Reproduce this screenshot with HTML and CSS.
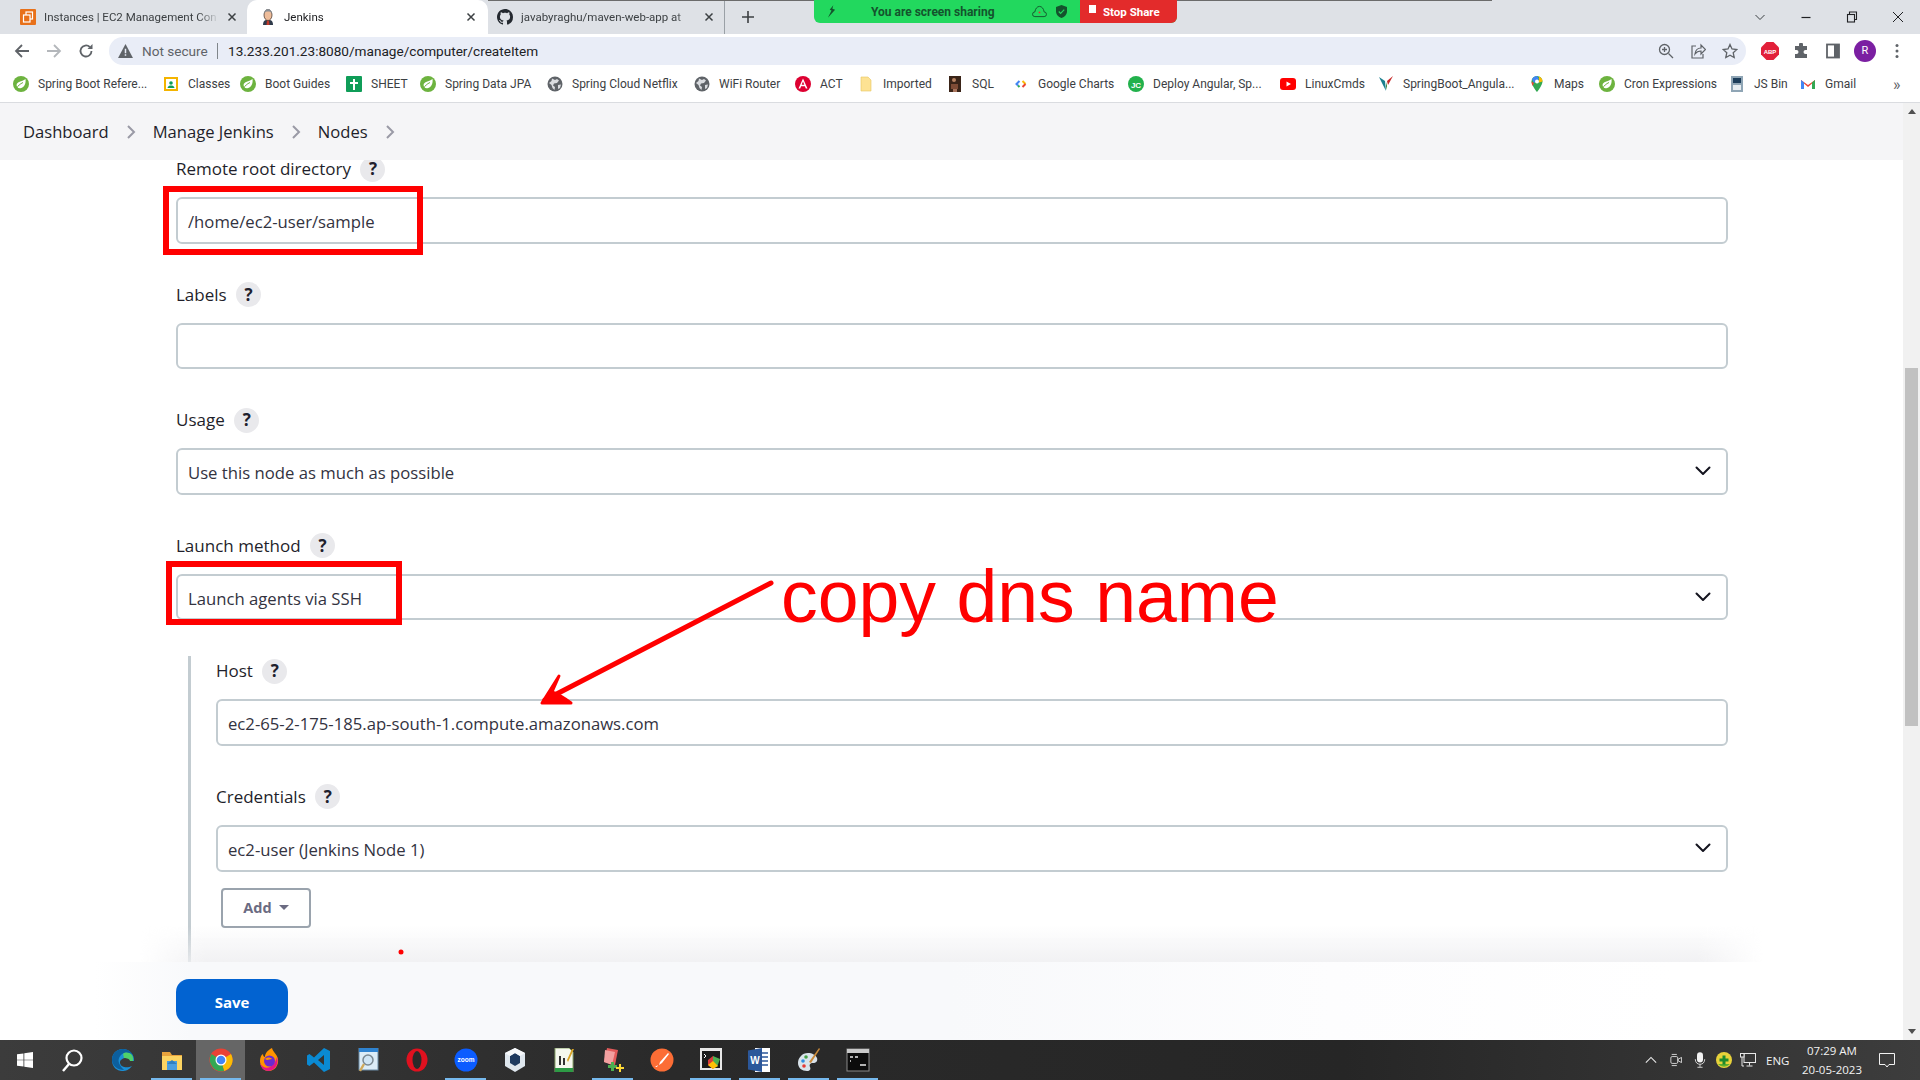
FILE: index.html
```html
<!DOCTYPE html>
<html lang="en">
<head>
<meta charset="utf-8">
<title>Jenkins</title>
<link rel="stylesheet" href="styles.css">
</head>
<body>
<svg class="defs" width="0" height="0" aria-hidden="true">
  <symbol id="leaf" viewBox="0 0 16 16">
    <circle cx="8" cy="8" r="8" fill="#6db33f"/>
    <path d="M12.5 3c.6 4-.8 8.5-5 9.2C5 12.6 3.4 11 3.6 8.8 4 5.400 8.500 6 12.500 3z" fill="#fff"/>
    <path d="M3.500 12.500C5 9.500 7 8 10 6.500" stroke="#6db33f" stroke-width="1" fill="none"/>
  </symbol>
  <symbol id="globe" viewBox="0 0 16 16">
    <circle cx="8" cy="8" r="7.500" fill="#5f6368"/>
    <path d="M5 2.500l3 1.500 2-1 2 1.500-2 2.500-3 .5-1 2 2 1.500-.5 3-2-2-1-3-2.500-2L4.500 5z" fill="#dadce0"/>
    <path d="M11 9l3-.5-1 3.500-2 1z" fill="#dadce0"/>
  </symbol>
  <symbol id="chev" viewBox="0 0 16 10">
    <path d="M1.500 1.500L8 8l6.500-6.500" fill="none" stroke="#14141f" stroke-width="2" stroke-linecap="round" stroke-linejoin="round"/>
  </symbol>
  <symbol id="crumb" viewBox="0 0 10 14">
    <path d="M2 1L8 7l-6 6" fill="none" stroke="#9a9aa6" stroke-width="2"/>
  </symbol>
</svg>

<div class="tabstrip">
  <div class="tab tab-first">
    <svg class="favicon" viewBox="0 0 16 16"><rect width="16" height="16" rx="1" fill="#e8711a"/><rect x="6" y="3" width="6.500" height="7" fill="none" stroke="#fff" stroke-width="1.200"/><rect x="3.500" y="6" width="6.500" height="7" fill="#e8711a" stroke="#fff" stroke-width="1.200"/></svg>
    <span class="tab-title">Instances | EC2 Management Con</span>
    <svg class="tab-close" viewBox="0 0 10 10"><path d="M1.500 1.500l7 7M8.500 1.500l-7 7" stroke="#3c4043" stroke-width="1.500"/></svg>
  </div>
  <div class="tab tab-active">
    <svg class="favicon" viewBox="0 0 16 16"><path d="M3 16c0-3 1-4.500 3-5h4c2 .5 3 2 3 5z" fill="#2f3a4a"/><path d="M7 11h2l.500 5h-3z" fill="#c0392b"/><ellipse cx="8" cy="6" rx="4" ry="5.500" fill="#eebd9b" stroke="#3b2a20" stroke-width=".7"/><path d="M4 5c0-3 2-5 4-5s4 2 4 5c-1-2-2-2.500-4-2.500S5 3 4 5z" fill="#8a8f96"/></svg>
    <span class="tab-title">Jenkins</span>
    <svg class="tab-close" viewBox="0 0 10 10"><path d="M1.500 1.500l7 7M8.500 1.500l-7 7" stroke="#3c4043" stroke-width="1.500"/></svg>
  </div>
  <div class="tab tab-github">
    <svg class="favicon" viewBox="0 0 16 16"><path fill="#24292f" d="M8 0C3.580 0 0 3.580 0 8c0 3.540 2.290 6.530 5.470 7.590.4.070.55-.17.55-.38 0-.19-.01-.82-.01-1.490-2.010.37-2.530-.49-2.690-.94-.09-.23-.48-.94-.82-1.130-.28-.15-.68-.52-.01-.53.630-.01 1.080.58 1.230.82.720 1.210 1.870.87 2.330.66.070-.52.280-.87.510-1.070-1.780-.2-3.640-.89-3.640-3.950 0-.87.310-1.590.82-2.150-.08-.2-.36-1.020.08-2.120 0 0 .67-.21 2.200.82.640-.18 1.320-.27 2-.27s1.360.09 2 .27c1.530-1.040 2.200-.82 2.200-.82.440 1.100.160 1.920.080 2.120.510.560.820 1.270.820 2.150 0 3.070-1.870 3.750-3.650 3.950.290.250.540.730.540 1.480 0 1.070-.01 1.930-.01 2.200 0 .210.150.460.550.380A8.010 8.010 0 0016 8c0-4.420-3.580-8-8-8z"/></svg>
    <span class="tab-title">javabyraghu/maven-web-app at</span>
    <svg class="tab-close" viewBox="0 0 10 10"><path d="M1.500 1.500l7 7M8.500 1.500l-7 7" stroke="#3c4043" stroke-width="1.500"/></svg>
  </div>
  <svg class="newtab" viewBox="0 0 12 12"><path d="M6 0v12M0 6h12" stroke="#3c4043" stroke-width="1.600"/></svg>
  <div class="winctl">
    <svg viewBox="0 0 12 12"><path d="M1.500 4L6 8.500 10.500 4" fill="none" stroke="#3c4043" stroke-width="1"/></svg>
    <svg viewBox="0 0 12 12"><path d="M1.500 6.500h9" stroke="#202124" stroke-width="1.200"/></svg>
    <svg viewBox="0 0 12 12"><rect x="1.500" y="3.500" width="7" height="7.500" fill="none" stroke="#202124" stroke-width="1.100"/><path d="M3.500 3.500v-2.500h7v7.500h-2" fill="none" stroke="#202124" stroke-width="1.100"/></svg>
    <svg viewBox="0 0 12 12"><path d="M1 1l10 10M11 1L1 11" stroke="#202124" stroke-width="1"/></svg>
  </div>
</div>

<div class="toolbar">
  <svg class="nav" viewBox="0 0 16 16"><path d="M15 8H2M8 2L2 8l6 6" fill="none" stroke="#5f6368" stroke-width="1.800"/></svg>
  <svg class="nav" viewBox="0 0 16 16"><path d="M1 8h13M8 2l6 6-6 6" fill="none" stroke="#b4b7bb" stroke-width="1.800"/></svg>
  <svg class="nav" viewBox="0 0 16 16"><path d="M13.500 8a5.500 5.500 0 11-1.700-4" fill="none" stroke="#5f6368" stroke-width="1.800"/><path d="M14.500 1v5h-5z" fill="#5f6368"/></svg>
  <div class="omnibox">
    <svg class="warn" viewBox="0 0 16 15"><path d="M8 0l8 15H0z" fill="#5f6368"/><path d="M7.200 5h1.600v5H7.200zM7.200 11h1.600v1.600H7.200z" fill="#e9edf7"/></svg>
    <span class="notsecure">Not secure</span>
    <span class="omni-sep"></span>
    <span class="url">13.233.201.23:8080/manage/computer/createItem</span>
    <span class="omni-icons">
      <svg viewBox="0 0 16 16"><circle cx="6.500" cy="6.500" r="5" fill="none" stroke="#5f6368" stroke-width="1.300"/><path d="M10.500 10.500L15 15M4 6.500h5M6.500 4v5" stroke="#5f6368" stroke-width="1.300"/></svg>
      <svg viewBox="0 0 16 16"><path d="M6 3H2v12h11v-4" fill="none" stroke="#5f6368" stroke-width="1.200"/><path d="M5 11c.500-4 3-6 6-6V2l4.500 4.500L11 11V8c-2.500 0-4.500 1-6 3z" fill="none" stroke="#5f6368" stroke-width="1.200"/></svg>
      <svg viewBox="0 0 16 16"><path d="M8 1.500l2 4.500 4.800.500-3.600 3.200 1 4.800L8 12.200l-4.200 2.300 1-4.800L1.200 6.500 6 6z" fill="none" stroke="#5f6368" stroke-width="1.300"/></svg>
    </span>
  </div>
  <div class="ext">
    <svg viewBox="0 0 18 18"><path d="M5.500 0h7L18 5.500v7L12.500 18h-7L0 12.500v-7z" fill="#e2203a"/><text x="9" y="11.500" class="abp">ABP</text></svg>
    <svg viewBox="0 0 16 16"><path d="M6 1.500a2 2 0 014 0V3h4v4h-1.500a2 2 0 000 4H14v4H2v-4h1.500a2 2 0 000-4H2V3h4z" fill="#5f6368"/></svg>
    <svg viewBox="0 0 16 16"><rect x="2" y="1.500" width="12" height="13" fill="none" stroke="#5f6368" stroke-width="1.800"/><rect x="9" y="2" width="5" height="12" fill="#5f6368"/></svg>
    <span class="avatar">R</span>
    <svg viewBox="0 0 16 16"><circle cx="8" cy="2.500" r="1.500" fill="#5f6368"/><circle cx="8" cy="8" r="1.500" fill="#5f6368"/><circle cx="8" cy="13.500" r="1.500" fill="#5f6368"/></svg>
  </div>
</div>

<div class="bookmarks">
  <div class="bm"><svg><use href="#leaf"/></svg><span>Spring Boot Refere...</span></div>
  <div class="bm"><svg viewBox="0 0 16 16"><rect x="1" y="1" width="14" height="14" fill="#f4b400"/><rect x="3" y="3" width="10" height="10" fill="#fff"/><circle cx="8" cy="7" r="1.800" fill="#0f9d58"/><path d="M4.500 12c.4-2 2-2.500 3.500-2.500s3.100.5 3.500 2.500z" fill="#0f9d58"/></svg><span>Classes</span></div>
  <div class="bm"><svg><use href="#leaf"/></svg><span>Boot Guides</span></div>
  <div class="bm"><svg viewBox="0 0 16 16"><rect width="16" height="16" rx="1" fill="#0f9d58"/><path d="M7 3h2v3h3v2H9v6H7V8H4V6h3z" fill="#fff"/></svg><span>SHEET</span></div>
  <div class="bm"><svg><use href="#leaf"/></svg><span>Spring Data JPA</span></div>
  <div class="bm"><svg><use href="#globe"/></svg><span>Spring Cloud Netflix</span></div>
  <div class="bm"><svg><use href="#globe"/></svg><span>WiFi Router</span></div>
  <div class="bm"><svg viewBox="0 0 16 16"><circle cx="8" cy="8" r="8" fill="#dd0031"/><path d="M8 2.500L3.500 12.500h1.700l.9-2.300h3.800l.9 2.300h1.700zM6.700 8.800L8 5.600l1.300 3.200z" fill="#fff"/></svg><span>ACT</span></div>
  <div class="bm"><svg viewBox="0 0 16 16"><path d="M3 1h7l3 3v11H3z" fill="#fde293" stroke="#e8c65f" stroke-width=".6"/></svg><span>Imported</span></div>
  <div class="bm"><svg viewBox="0 0 16 16"><rect x="2" width="12" height="16" fill="#3a2418"/><circle cx="7" cy="4" r="2" fill="#b98462"/><path d="M4 8h7v5H4z" fill="#7e4b35"/><path d="M6 13h4v3H6z" fill="#a9745c"/></svg><span>SQL</span></div>
  <div class="bm"><svg viewBox="0 0 16 16"><path d="M6.500 5L3.500 8l1.500 1.500" fill="none" stroke="#4285f4" stroke-width="2"/><path d="M5 9.500L6.500 11" stroke="#34a853" stroke-width="2"/><path d="M9.500 5l3 3" stroke="#fbbc05" stroke-width="2"/><path d="M12.500 8l-3 3" stroke="#ea4335" stroke-width="2"/></svg><span>Google Charts</span></div>
  <div class="bm"><svg viewBox="0 0 16 16"><circle cx="8" cy="8" r="8" fill="#22b14c"/><text x="8" y="11.500" class="jc">JC</text></svg><span>Deploy Angular, Sp...</span></div>
  <div class="bm"><svg viewBox="0 0 16 16"><rect y="2" width="16" height="12" rx="3" fill="#f00"/><path d="M6.500 5.500v5L11 8z" fill="#fff"/></svg><span>LinuxCmds</span></div>
  <div class="bm"><svg viewBox="0 0 16 16"><path d="M1 1l6 4 1 10z" fill="#1a7f8e"/><path d="M15 0L9 5l1 4z" fill="#c62828"/><path d="M8 6l1 4-1 4z" fill="#2e7d32"/></svg><span>SpringBoot_Angula...</span></div>
  <div class="bm"><svg viewBox="0 0 16 16"><path d="M8 0a5.500 5.500 0 00-5.500 5.500C2.500 9.500 8 16 8 16s5.500-6.500 5.500-10.500A5.500 5.500 0 008 0z" fill="#34a853"/><path d="M3 3.500A5.500 5.500 0 018 0l2 3-5 4z" fill="#4285f4"/><path d="M2.500 5.500L5 7l-1.500 3c-.600-1.400-1-3-1-4.500z" fill="#ea4335"/><path d="M10 .5a5.500 5.500 0 013.500 5l-3.500 1z" fill="#fbbc05"/><circle cx="8" cy="5.500" r="2" fill="#fff"/></svg><span>Maps</span></div>
  <div class="bm"><svg><use href="#leaf"/></svg><span>Cron Expressions</span></div>
  <div class="bm"><svg viewBox="0 0 16 16"><rect x="2" width="12" height="16" fill="#8fa5b5"/><rect x="4" y="2" width="8" height="5" fill="#1c3d5a"/><rect x="4" y="9" width="8" height="5" fill="#e8eef2"/></svg><span>JS Bin</span></div>
  <div class="bm"><svg viewBox="0 0 16 16"><path d="M1 13V4l7 5 7-5v9h-3V7.500L8 11 4 7.500V13z" fill="#ea4335"/><path d="M1 13V4l3 2.500V13z" fill="#4285f4"/><path d="M15 13V4l-3 2.500V13z" fill="#34a853"/></svg><span>Gmail</span></div>
  <div class="bm-more">»</div>
</div>

<div class="workspace">
  <div class="page">
    <nav class="breadcrumbs">
      <span>Dashboard</span><svg><use href="#crumb"/></svg>
      <span>Manage Jenkins</span><svg><use href="#crumb"/></svg>
      <span>Nodes</span><svg><use href="#crumb"/></svg>
    </nav>
    <main class="form">
      <div class="form-scroll">
        <div class="field">
          <div class="label-row"><label>Remote root directory</label><span class="help">?</span></div>
          <div class="control">/home/ec2-user/sample</div>
        </div>
        <div class="field">
          <div class="label-row"><label>Labels</label><span class="help">?</span></div>
          <div class="control"></div>
        </div>
        <div class="field">
          <div class="label-row"><label>Usage</label><span class="help">?</span></div>
          <div class="control select">Use this node as much as possible<svg><use href="#chev"/></svg></div>
        </div>
        <div class="field">
          <div class="label-row"><label>Launch method</label><span class="help">?</span></div>
          <div class="control select">Launch agents via SSH<svg><use href="#chev"/></svg></div>
        </div>
        <div class="sub">
          <div class="field">
            <div class="label-row"><label>Host</label><span class="help">?</span></div>
            <div class="control">ec2-65-2-175-185.ap-south-1.compute.amazonaws.com</div>
          </div>
          <div class="field field-last">
            <div class="label-row"><label>Credentials</label><span class="help">?</span></div>
            <div class="control select">ec2-user (Jenkins Node 1)<svg><use href="#chev"/></svg></div>
          </div>
          <button class="add">Add<i class="caret"></i></button>
        </div>
      </div>
      <div class="fade"></div>
    </main>
    <footer class="actions"><button class="save">Save</button></footer>
  </div>
  <div class="scrollbar">
    <i class="arrow-up"></i>
    <div class="track"><div class="thumb"></div></div>
    <i class="arrow-down"></i>
  </div>
</div>

<div class="taskbar">
  <div class="tb tb-start"><svg viewBox="0 0 18 18"><path d="M0 2.600l7.300-1v7H0zM8.200 1.400L18 0v8.600H8.200zM0 9.400h7.300v7L0 15.400zM8.200 9.400H18V18l-9.800-1.400z" fill="#fff"/></svg></div>
  <div class="tb tb-search"><svg viewBox="0 0 24 24"><circle cx="14" cy="10" r="7.500" fill="none" stroke="#fff" stroke-width="2.200"/><path d="M9 16l-6 7" stroke="#fff" stroke-width="2.400"/></svg></div>
  <div class="tb"><svg viewBox="0 0 24 24"><path d="M12 1C5 1 1 6 1 12c0 7 5 11 10 11 4 0 7-1 10-5-4 2-11 2-12-3-.500-3 3-5 6-5 3 0 4 1 4 3h4c.500-7-5-12-11-12z" fill="#1a8fd6"/><path d="M1 12c0-6 4-11 11-11 5 0 9 3 10 7-3-4-9-4-12-1-3 3-3 7-1 10 1 2 3 4 4 5C7 22 1 18 1 12z" fill="#0c5f9e"/><path d="M13 10c3 0 6 1 6 3h3c.500-3-.500-5-1-6-3-3-7-3-9-1z" fill="#4fd06a"/></svg></div>
  <div class="tb tb-open"><svg viewBox="0 0 24 24"><path d="M2 4h8l2 3h10v15H2z" fill="#e8a33d"/><path d="M2 8h20v14H2z" fill="#fcd462"/><path d="M7 13h10v9H7z" fill="#4a9ee0"/><path d="M7 16l5-4 5 4" fill="#2f7fc1"/></svg></div>
  <div class="tb tb-active tb-open"><svg viewBox="0 0 24 24"><circle cx="12" cy="12" r="11.500" fill="#e94235"/><path d="M12 12L22 6a11.500 11.500 0 01-7 17z" fill="#fbbc04"/><path d="M12 12l3 11A11.500 11.500 0 012.500 6z" fill="#34a853"/><circle cx="12" cy="12" r="5.500" fill="#fff"/><circle cx="12" cy="12" r="4.300" fill="#4285f4"/></svg></div>
  <div class="tb"><svg viewBox="0 0 24 24"><path d="M14 0c1 4 5 6 6 11 1 7-4 12-9 12-6 0-9-5-9-10 0-3 1-6 3-7 0 2 1 3 2 3 0-4 3-7 7-9z" fill="#ff9400"/><path d="M19 9c2 6-1 13-8 14-5 0-8-3-9-8 2 4 6 6 10 4 4-2 6-6 7-10z" fill="#e31587"/><circle cx="11.500" cy="13" r="5.500" fill="#6a2ad0"/><path d="M7 11c2-2 5-2 7 0-2 0-3 1-5 1z" fill="#ff9400"/></svg></div>
  <div class="tb"><svg viewBox="0 0 24 24"><path d="M17 0l6 3v18l-6 3-10-9.500L2.500 18 0 16.500V7.500L2.500 6 7 9.500zM17 7l-6 5 6 5z" fill="#0a8ad3"/></svg></div>
  <div class="tb"><svg viewBox="0 0 24 24"><rect x="3" y="0" width="19" height="22" fill="#dcecf7" stroke="#6b8aa3"/><rect x="3" y="0" width="19" height="4" fill="#2f83d0"/><circle cx="12" cy="12" r="5" fill="#cfe5f5" stroke="#7a8892" stroke-width="1.500"/><path d="M8 16l-4 7" stroke="#d1a95a" stroke-width="2.400"/></svg></div>
  <div class="tb"><svg viewBox="0 0 24 24"><ellipse cx="12" cy="12" rx="10.500" ry="11.500" fill="#e0111f"/><ellipse cx="12" cy="12" rx="4.500" ry="9" fill="#2a2a2a"/></svg></div>
  <div class="tb tb-open"><svg viewBox="0 0 24 24"><ellipse cx="12" cy="12" rx="11.500" ry="11.500" fill="#0b5cff"/><text x="12" y="14" class="zoomt">zoom</text></svg></div>
  <div class="tb"><svg viewBox="0 0 24 24"><path d="M12 0l10 5v13l-10 6-10-6V5z" fill="#dfe7ee"/><path d="M12 5l5 3v7l-5 3-5-3V8z" fill="#1e3a5f"/><path d="M12 0l10 5-5 3-5-3-5 3-5-3z" fill="#f7f9fb"/></svg></div>
  <div class="tb"><svg viewBox="0 0 24 24"><path d="M3 0h14l4 4v20H3z" fill="#f5f8ee" stroke="#8aa36b"/><rect x="3" y="20" width="18" height="4" fill="#2d9a45"/><path d="M7 8h2v9H7zM11 10h2v7h-2z" fill="#333"/><path d="M22 1l-6 13-1-2 5-11z" fill="#d8a326"/></svg></div>
  <div class="tb tb-open"><svg viewBox="0 0 24 24"><path d="M6 0l11 2-3 15-11-3z" fill="#e25a5a"/><path d="M4 2l10 2-3 13-8-3z" fill="#f2a0a0"/><path d="M10 14h3v3h3v3h-3v3h-3v-3H7v-3h3z" fill="#4caf50"/><path d="M18 16h2v3h3v2h-3v3h-2v-3h-3v-2h3z" fill="#fdd835"/></svg></div>
  <div class="tb"><svg viewBox="0 0 24 24"><circle cx="12" cy="12" r="11.500" fill="#fc6d35"/><path d="M18 5l1 1-7 9-3 2 1-3zM7 19l1-2-3 2z" fill="#fff"/></svg></div>
  <div class="tb tb-open"><svg viewBox="0 0 24 24"><rect x="1" y="0" width="22" height="22" fill="#e8e8e8"/><rect x="3" y="3" width="18" height="17" fill="#1b1b1b"/><path d="M5 6l2 2-2 2" stroke="#fff" fill="none"/><path d="M9 12l5-4 4 5-4 8-5-4z" fill="#d83b3b"/><path d="M14 8l7 3-3 8-4-6z" fill="#4caf50"/><path d="M9 17l5 4 5-3-5-5z" fill="#ffc107"/></svg></div>
  <div class="tb tb-open"><svg viewBox="0 0 24 24"><path d="M7 0h15v24H7z" fill="#fff"/><path d="M10 5h10M10 9h10M10 13h10M10 17h10" stroke="#2b579a" stroke-width="1.600"/><path d="M0 2.500L14 0v24L0 21.500z" fill="#2b579a"/><text x="7" y="16" class="wordt">W</text></svg></div>
  <div class="tb tb-open"><svg viewBox="0 0 24 24"><path d="M11 5C5 5 1 10 1 15s4 8 9 8c3 0 4-2 3-4s0-4 3-4 5-2 4-5-5-5-9-5z" fill="#d9e3ea"/><circle cx="6" cy="13" r="1.800" fill="#2e8de0"/><circle cx="9" cy="9" r="1.800" fill="#43a047"/><circle cx="7" cy="18" r="1.800" fill="#e53935"/><path d="M22 0l1 1-9 14-2-1z" fill="#c98a3a"/></svg></div>
  <div class="tb tb-open"><svg viewBox="0 0 24 24"><rect x="1" y="1" width="22" height="22" fill="#0c0c0c" stroke="#8a8a8a"/><rect x="1" y="1" width="22" height="4" fill="#c9c9c9"/><path d="M4 9h3M9 9h3M4 13h1M14 17h6" stroke="#e8e8e8" stroke-width="1.500"/></svg></div>
  <div class="tray">
    <svg class="t-chev" viewBox="0 0 14 8"><path d="M1 7l6-6 6 6" fill="none" stroke="#e8e8e8" stroke-width="1.300"/></svg>
    <svg class="t-cam" viewBox="0 0 14 16"><rect x="1" y="4" width="8" height="8" rx="1.500" fill="none" stroke="#e8e8e8"/><path d="M9.500 7l4-2v6l-4-2z" fill="none" stroke="#e8e8e8"/><path d="M2 1.500h6M2 14.500h6" stroke="#e8e8e8"/></svg>
    <svg class="t-mic" viewBox="0 0 14 18"><rect x="3.500" y="0" width="7" height="12" rx="3.500" fill="#f2f2f2"/><path d="M1.500 8c0 4 2.500 6 5.500 6s5.500-2 5.500-6M7 14v3M4 17.500h6" fill="none" stroke="#e8e8e8"/></svg>
    <svg class="t-360" viewBox="0 0 16 16"><circle cx="8" cy="8" r="8" fill="#e8d23a"/><path d="M2 12a8 8 0 0012 0z" fill="#5fae2e"/><path d="M6.500 3.500h3v3h3v3h-3v3h-3v-3h-3v-3h3z" fill="#1e8a2c"/></svg>
    <svg class="t-net" viewBox="0 0 16 14"><rect x="4" y=".5" width="11.500" height="9" fill="none" stroke="#e8e8e8"/><rect x=".5" y=".5" width="3.500" height="3.500" fill="#2a2a2a" stroke="#e8e8e8"/><path d="M9.500 9.500v3M6.500 13h6M2 4v9h2" fill="none" stroke="#e8e8e8"/></svg>
    <span class="t-lang">ENG</span>
    <div class="t-clock"><span>07:29 AM</span><span>20-05-2023</span></div>
    <svg class="t-note" viewBox="0 0 16 15"><path d="M.5.500h15v11H10L8 14l-2-2.500H.5z" fill="none" stroke="#f2f2f2"/></svg>
  </div>
</div>

<div class="sharebar">
  <svg class="sb-leaf" viewBox="0 0 10 14"><path d="M7 0L3 5l2 1-4 8 8-9-3-1z" fill="#14532d"/></svg>
  <span class="sb-text">You are screen sharing</span>
  <svg class="sb-cloud" viewBox="0 0 16 14"><path d="M3 12.500a2.500 2.500 0 010-5c.5-3.500 2.500-6 5-6s4.500 2.500 5 6a2.500 2.500 0 010 5z" fill="none" stroke="#14532d"/><circle cx="8" cy="8" r="1" fill="#d33"/></svg>
  <svg class="sb-shield" viewBox="0 0 12 14"><path d="M6 0l6 2v5c0 3-2.500 6-6 7-3.500-1-6-4-6-7V2z" fill="#14532d"/><path d="M3 7l2 2 4-4" fill="none" stroke="#22d85e" stroke-width="1.300"/></svg>
  <div class="sb-stop"><i></i><span>Stop Share</span></div>
</div>
<div class="topline"></div>

<svg class="annot" viewBox="0 0 1920 1080" aria-hidden="true">
  <rect x="166" y="189" width="254" height="63" class="a-box"/>
  <rect x="169" y="564" width="230" height="58" class="a-box"/>
  <text x="781" y="622" class="a-text">copy dns name</text>
  <path d="M771 583L545 700" class="a-line"/>
  <path d="M559 676L542 703H571Q560 695 552 692z" class="a-head"/>
  <circle cx="401" cy="952" r="2.500" fill="#f00"/>
</svg>
</body>
</html>
```
FILE: styles.css
```css
* { box-sizing: border-box; }
html, body { margin: 0; height: 100%; }
body {
  width: 1920px; height: 1080px; overflow: hidden; position: relative;
  display: flex; flex-direction: column; background: #fff;
  font-family: "Open Sans", "Noto Sans", sans-serif; color: #14141f;
}
.defs { position: absolute; }

/* Browser tab strip */
.tabstrip { height: 34px; background: #dee1e6; display: flex; align-items: stretch; padding-left: 7px; flex: none; }
.tab {
  display: flex; align-items: center; gap: 8px; width: 240px; padding: 0 10px 0 13px;
  font: 11.5px Roboto, sans-serif; color: #3c4043;
}
.tab-active { width: 241px; padding-right: 12px; background: #fff; border-radius: 10px 10px 0 0; color: #202124; }
.tab-github { width: 237px; padding-left: 9px; border-right: 1px solid #9aa0a6; }
.favicon { width: 16px; height: 16px; flex: none; }
.tab-title { flex: 1; white-space: nowrap; overflow: hidden; -webkit-mask-image: linear-gradient(90deg,#000 88%,transparent); mask-image: linear-gradient(90deg,#000 88%,transparent); }
.tab-close { width: 10px; height: 10px; flex: none; }
.newtab { width: 12px; height: 12px; align-self: center; margin-left: 17px; }
.winctl { margin-left: auto; display: flex; align-items: center; padding-right: 16px; gap: 34px; }
.winctl svg { width: 12px; height: 12px; }

/* Toolbar */
.toolbar { height: 34px; flex: none; display: flex; align-items: center; padding-left: 14px; background: #fff; }
.nav { width: 16px; height: 16px; margin-right: 16px; }
.omnibox {
  margin-left: -1px; width: 1637px; height: 28px; border-radius: 14px; background: #e9edf7;
  display: flex; align-items: center; padding-left: 9px; font: 13.600px Roboto, sans-serif;
}
.warn { width: 15px; height: 14px; margin-right: 9px; }
.notsecure { color: #5f6368; width: 67px; white-space: nowrap; }
.omni-sep { width: 1px; height: 16px; background: #80868b; margin: 0 10px 0 8px; }
.url { color: #202124; }
.omni-icons { margin-left: auto; display: flex; gap: 16px; padding-right: 8px; }
.omni-icons svg { width: 16px; height: 16px; }
.ext { display: flex; align-items: center; gap: 16px; margin-left: 15px; }
.ext svg { width: 16px; height: 16px; }
.ext svg:first-child { width: 18px; height: 18px; margin-right: -2px; }
.abp { font: 700 6px "Liberation Sans", sans-serif; fill: #fff; text-anchor: middle; }
.avatar { width: 22px; height: 22px; margin: 0 -3px; border-radius: 50%; background: #7b1fa2; color: #fff; font: 11px/22px Roboto, sans-serif; text-align: center; }

/* Bookmarks */
.bookmarks {
  height: 35px; flex: none; background: #fff; border-bottom: 1px solid #dadce0; padding: 0 0 2px 13px;
  display: grid; align-items: center;
  grid-template-columns: 150px 77px 106px 74px 127px 147px 101px 63px 89px 66px 115px 152px 98px 151px 70px 130px 71px 93px 20px;
}
.bm { display: flex; align-items: center; gap: 9px; font: 12px Roboto, sans-serif; color: #3c4043; white-space: nowrap; }
.bm svg { width: 16px; height: 16px; flex: none; }
.jc { font: 700 8px "Liberation Sans", sans-serif; fill: #fff; text-anchor: middle; }
.bm-more { font: 16px Roboto, sans-serif; color: #5f6368; }

/* Workspace */
.workspace { height: 937px; flex: none; display: flex; }
.page { width: 1903px; display: flex; flex-direction: column; }
.breadcrumbs {
  height: 57px; flex: none; background: #f5f5f7; display: flex; align-items: center; padding-left: 23px;
  font-size: 16.600px; font-weight: 500; color: #1f1f2b;
}
.breadcrumbs svg { width: 10px; height: 14px; margin: 0 17px 0 17px; }
.form { flex: 1; min-height: 0; overflow: hidden; position: relative; padding: 0 175px 0 176px; }
.form-scroll { margin-top: -6px; }
.field { display: flex; flex-direction: column; gap: 13px; margin-bottom: 36px; }
.field-last { margin-bottom: 0; }
.label-row { height: 30px; display: flex; align-items: center; gap: 9.500px; }
.label-row label { font-size: 17px; line-height: 16px; font-weight: 500; color: #1f1f2b; }
.help { width: 25px; height: 25px; border-radius: 50%; background: #e9e9ec; font-size: 17px; font-weight: 700; line-height: 16px; color: #20202c; display: flex; align-items: center; justify-content: center; }
.control {
  height: 46.600px; border: 2px solid #c3ccd1; border-radius: 6px; padding: 2px 10px 0; background: #fff;
  display: flex; align-items: center; justify-content: space-between; font-size: 16.700px; color: #33333f;
}
.select svg { width: 16px; height: 10px; margin: -2px 5px 0 0; }
.sub { border-left: 3px solid #c3ccd1; margin-left: 12px; padding-left: 25px; padding-bottom: 60px; }
.add {
  display: flex; align-items: center; justify-content: center; gap: 7px; width: 90px; height: 40px; margin: 16px 0 0 5px;
  background: #fff; border: 2px solid #9aa3ad; border-radius: 4px; font: 700 14.500px "Open Sans", sans-serif; color: #6b6b82;
}
.caret { border: 5px solid transparent; border-top-color: #6b6b82; border-bottom: 0; }
.fade {
  position: absolute; left: 140px; right: 140px; bottom: 0; height: 36px; pointer-events: none;
  background: linear-gradient(rgba(240,240,242,0), #f1f1f3);
  -webkit-mask-image: linear-gradient(90deg, transparent, #000 4%, #000 96%, transparent);
  mask-image: linear-gradient(90deg, transparent, #000 4%, #000 96%, transparent);
}
.actions {
  height: 78px; flex: none; display: flex; align-items: center; padding-left: 176px; padding-top: 1px;
  background: linear-gradient(90deg, #fff 5%, #f8f9fb 10%, #f8f9fb 50%, #fdfdfe 70%, #fff 88%);
}
.save {
  width: 112px; height: 45px; border: 0; border-radius: 13px; background: #0263d1; color: #fff;
  font: 700 15px "Open Sans", sans-serif;
}

/* Page scrollbar */
.scrollbar { width: 17px; flex: none; background: #f1f1f1; display: flex; flex-direction: column; align-items: center; }
.arrow-up, .arrow-down { width: 0; height: 0; border: 4px solid transparent; margin: 6px 0; }
.arrow-up { border-bottom: 5px solid #505050; border-top: 0; }
.arrow-down { border-top: 5px solid #505050; border-bottom: 0; }
.track { flex: 1; width: 100%; padding: 248px 2px 0; }
.thumb { height: 358px; background: #c1c1c1; }

/* Windows taskbar */
.taskbar {
  height: 40px; flex: none; display: flex; align-items: stretch;
  background: linear-gradient(90deg, #3c3c3c, #2a2a2a 35%, #262626 70%, #3d3d3d);
}
.tb { width: 49px; display: flex; align-items: center; justify-content: center; position: relative; }
.tb svg { width: 24px; height: 24px; }
.tb-start svg { width: 16px; height: 16px; }
.tb-search svg { margin-left: -3px; }
.tb-active { background: #666; }
.tb-open::after { content: ""; position: absolute; left: 4px; right: 4px; bottom: 0; height: 2px; background: #76b9ed; }
.tray { margin-left: auto; display: flex; align-items: center; padding-right: 25px; color: #f2f2f2; font: 11.500px "Open Sans", sans-serif; }
.t-chev { width: 12px; height: 8px; margin-right: 13px; }
.t-cam { width: 12px; height: 16px; margin-right: 12px; }
.t-mic { width: 12px; height: 18px; margin-right: 10px; }
.t-360 { width: 16px; height: 16px; margin-right: 8px; }
.t-net { width: 16px; height: 14px; margin-right: 10px; }
.t-lang { width: 24px; margin-right: 11px; white-space: nowrap; }
.t-clock { display: flex; flex-direction: column; align-items: center; line-height: 19px; width: 62px; margin-right: 16px; white-space: nowrap; }
.t-note { width: 16px; height: 15px; }
.zoomt { font: 700 6.500px "Liberation Sans", sans-serif; fill: #fff; text-anchor: middle; }
.wordt { font: 700 10px "Liberation Sans", sans-serif; fill: #fff; text-anchor: middle; }

/* Zoom sharing bar, floats over the browser window */
.sharebar {
  position: absolute; z-index: 2; left: 814px; top: 0; width: 363px; height: 23px; background: #22d85e; border-radius: 0 0 6px 6px;
  display: flex; align-items: center; overflow: hidden; font: 700 12px Roboto, sans-serif; color: #14532d;
}
.sb-leaf { width: 9px; height: 13px; margin-left: 13px; }
.sb-text { margin-left: 35px; width: 125px; white-space: nowrap; }
.sb-cloud { width: 15px; height: 13px; margin-left: 36px; }
.sb-shield { width: 11px; height: 13px; margin-left: 9px; }
.sb-stop { margin-left: 13px; flex: 1; height: 100%; background: #e32b2b; color: #fff; display: flex; align-items: center; padding-left: 9px; gap: 7px; font-size: 11.500px; }
.sb-stop i { width: 7px; height: 8px; background: #fff; margin-top: -5px; }
.topline { position: absolute; left: 488px; top: 0; width: 1004px; height: 1px; background: #6b6b6b; }

/* Red annotations painted on the screenshot */
.annot { position: absolute; left: 0; top: 0; width: 1920px; height: 1080px; pointer-events: none; z-index: 3; }
.a-box { fill: none; stroke: #f00; stroke-width: 6; }
.a-text { font: 73.400px "Liberation Sans", sans-serif; fill: #f00; }
.a-line { fill: none; stroke: #f00; stroke-width: 5; stroke-linecap: round; }
.a-head { fill: #f00; stroke: #f00; stroke-width: 3; stroke-linejoin: round; }
```
